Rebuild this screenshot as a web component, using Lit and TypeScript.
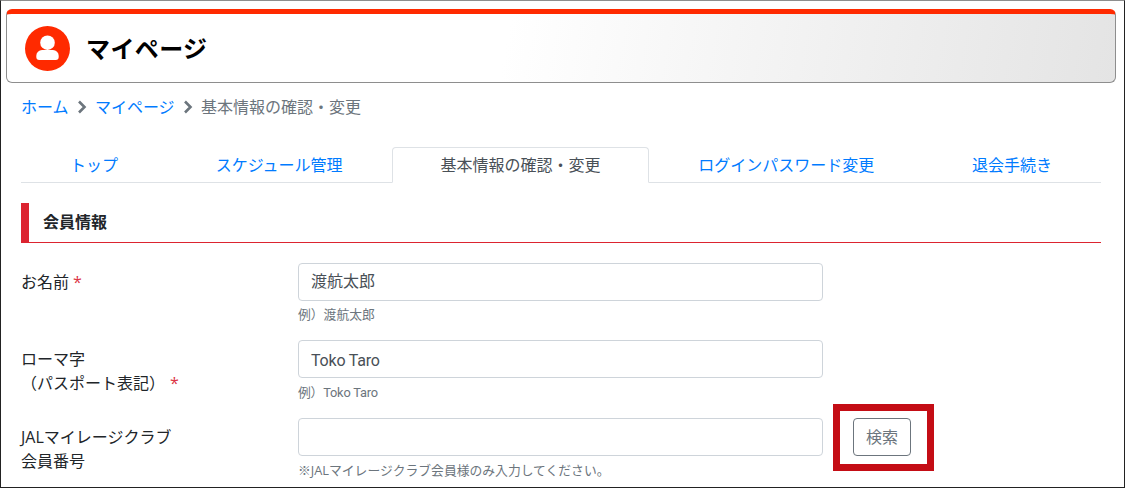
import { LitElement, html, css } from "lit";
import { customElement } from "lit/decorators.js";

@customElement("app-root")
export class AppRoot extends LitElement {
  static styles = css`
    :host {
      display: block;
      width: 1125px;
      height: 488px;
      overflow: hidden;
      font-family: "Open Sans", "Noto Sans CJK JP", sans-serif;
      font-size: 16px;
      line-height: 24px;
      color: #212529;
    }
    * { box-sizing: border-box; }
    .frame {
      position: relative;
      height: 488px;
      overflow: hidden;
      background: #fff;
      border-left: 1px solid #222;
      border-right: 1px solid #222;
      border-bottom: 1px solid #222;
      border-top: 1px solid #8e8e8e;
      padding: 8px 8px 0 5px;
    }
    .page-head {
      height: 74px;
      border: 1px solid #8e8e8e;
      border-top: 5px solid #ff2a00;
      border-radius: 6px;
      background: linear-gradient(100deg, #fff 0%, #fff 45%, #e4e4e4 100%);
      display: flex;
      align-items: center;
      padding-left: 18px;
      gap: 16px;
    }
    .avatar { width: 45px; height: 45px; display: block; flex: none; }
    h1 {
      margin: 4px 0 0;
      font-family: "Liberation Sans", "Noto Sans CJK JP", sans-serif;
      font-size: 24px;
      font-weight: 700;
      line-height: 36px;
      letter-spacing: 0.4px;
      color: #000;
    }
    .content { padding: 12px 15px 0; }
    .crumbs {
      display: flex;
      align-items: center;
      height: 24px;
      color: #6c757d;
      gap: 8.2px;
    }
    a { color: #007bff; text-decoration: none; }
    .sep { width: 10px; height: 14px; display: block; }
    .tabs {
      display: flex;
      margin-top: 28px;
      border-bottom: 1px solid #dee2e6;
      height: 36px;
    }
    .tab {
      flex: 1 1 auto;
      text-align: center;
      padding: 5px 24px 0;
      height: 36px;
      border: 1px solid transparent;
      border-radius: 4px 4px 0 0;
    }
    .tab.active {
      color: #495057;
      background: #fff;
      border-color: #dee2e6 #dee2e6 #fff;
    }
    .section {
      margin-top: 20px;
      height: 40px;
      border-left: 8px solid #dc2430;
      border-bottom: 1px solid #dc2430;
      padding: 7px 0 0 14px;
      font-size: 16px;
      font-weight: 700;
      line-height: 24px;
      color: #212529;
    }
    .form {
      margin-top: 20px;
      display: flex;
      flex-direction: column;
      gap: 16px;
    }
    .row {
      display: grid;
      grid-template-columns: 277px 525px auto;
      column-gap: 0;
    }
    .row.last { margin-top: 0.8px; }
    .label { padding-top: 7px; }
    .req { color: #dc3545; margin-left: 4px; }
    .req.wide { margin-left: 5px; }
    .input {
      height: 38px;
      border: 1px solid #ced4da;
      border-radius: 4px;
      padding: 5px 12px 7px;
      color: #495057;
      background: #fff;
    }
    .latin {
      font-family: "Roboto", "Noto Sans CJK JP", sans-serif;
      letter-spacing: -0.2px;
    }
    .input.latin { padding: 8px 12px 4px; }
    .help {
      margin-top: 4px;
      font-size: 12.8px;
      line-height: 19.2px;
      color: #6c757d;
    }
    .help.low { margin: 5px 0 -1px; }
    .btn-cell { padding-left: 30px; }
    .btn {
      display: flex;
      align-items: center;
      justify-content: center;
      width: 58px;
      height: 38px;
      border: 1px solid #6c757d;
      border-radius: 4px;
      color: #6c757d;
      background: #fff;
    }
    .mark {
      position: absolute;
      left: 832px;
      top: 403px;
      width: 101px;
      height: 67px;
      border: 7px solid #c40d15;
      pointer-events: none;
    }
  `;

  private chevron() {
    return html`<svg class="sep" viewBox="0 0 10 14" aria-hidden="true">
      <path d="M2 1.5 7.5 7 2 12.5" fill="none" stroke="#6c757d" stroke-width="2.6" />
    </svg>`;
  }

  render() {
    return html`
      <div class="frame">
        <header class="page-head">
          <svg class="avatar" viewBox="0 0 45 45" aria-hidden="true">
            <circle cx="22.5" cy="22.5" r="22.5" fill="#ff2a00" />
            <circle cx="22.5" cy="16.7" r="7.3" fill="#fff" />
            <path d="M17 24 h11 a5.7 5.7 0 0 1 5.7 5.7 v1.3 a3 3 0 0 1 -3 3 h-16.4 a3 3 0 0 1 -3 -3 v-1.3 a5.7 5.7 0 0 1 5.7 -5.7 z" fill="#fff" />
          </svg>
          <h1>マイページ</h1>
        </header>
        <div class="content">
          <nav class="crumbs">
            <a href="#">ホーム</a>${this.chevron()}<a href="#">マイページ</a>${this.chevron()}<span>基本情報の確認・変更</span>
          </nav>
          <div class="tabs">
            <a class="tab" href="#">トップ</a>
            <a class="tab" href="#">スケジュール管理</a>
            <a class="tab active" href="#">基本情報の確認・変更</a>
            <a class="tab" href="#">ログインパスワード変更</a>
            <a class="tab" href="#">退会手続き</a>
          </div>
          <div class="section">会員情報</div>
          <div class="form">
            <div class="row">
              <div class="label">お名前<span class="req">*</span></div>
              <div>
                <div class="input">渡航太郎</div>
                <div class="help">例）渡航太郎</div>
              </div>
            </div>
            <div class="row">
              <div class="label">ローマ字<br />（パスポート表記）<span class="req wide">*</span></div>
              <div>
                <div class="input latin">Toko Taro</div>
                <div class="help latin low">例）Toko Taro</div>
              </div>
            </div>
            <div class="row last">
              <div class="label">JALマイレージクラブ<br />会員番号</div>
              <div>
                <div class="input"></div>
                <div class="help low">※JALマイレージクラブ会員様のみ入力してください。</div>
              </div>
              <div class="btn-cell"><div class="btn">検索</div></div>
            </div>
          </div>
        </div>
        <div class="mark"></div>
      </div>
    `;
  }
}
